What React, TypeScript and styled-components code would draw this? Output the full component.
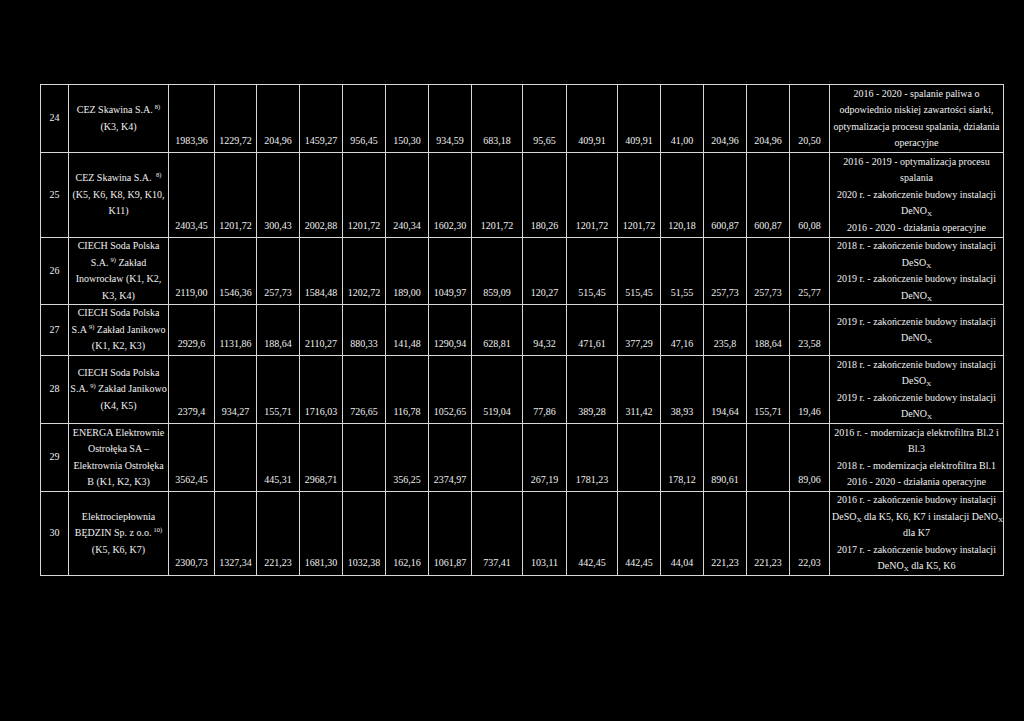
import React from 'react';
import styled, { createGlobalStyle } from 'styled-components';

const GlobalStyle = createGlobalStyle`
  html, body {
    margin: 0;
    padding: 0;
    background: #000;
  }
  body {
    font-family: "Liberation Serif", "Times New Roman", serif;
    color: #f0f0f0;
  }
`;

const Page = styled.div`
  width: 1024px;
  height: 721px;
  box-sizing: border-box;
  padding: 84px 0 0 40px;
  background: #000;
  overflow: hidden;
`;

const Table = styled.table`
  border-collapse: collapse;
  table-layout: fixed;
  width: 964px;
  font-size: 10px;
  line-height: 16.5px;
`;

const Col = styled.col<{ $w: number }>`
  width: ${(p) => p.$w}px;
`;

const Row = styled.tr<{ $h: number }>`
  height: ${(p) => p.$h}px;
`;

const Cell = styled.td`
  border: 1px solid #d8d8d8;
  padding: 0;
  text-align: center;
  vertical-align: middle;
  white-space: nowrap;
  overflow: hidden;
`;

const NumCell = styled(Cell)`
  vertical-align: bottom;
  padding-bottom: 3px;
`;

const NoteCell = styled(Cell)`
  padding: 0 2px;
`;

const Line = styled.div`
  display: block;
`;

const Sup = styled.sup`
  font-size: 6.5px;
  line-height: 0;
  vertical-align: 4px;
  margin-left: 2px;
`;

const Sub = styled.sub`
  font-size: 7px;
  line-height: 0;
  vertical-align: -2px;
`;

const colWidths = [28, 100, 46, 42, 43, 43, 43, 43, 43, 51, 44, 51, 43, 43, 43, 43, 40, 174];

const NOx = () => (
  <>
    DeNO<Sub>X</Sub>
  </>
);
const SOx = () => (
  <>
    DeSO<Sub>X</Sub>
  </>
);

interface Entry {
  lp: string;
  height: number;
  name: React.ReactNode[];
  values: string[];
  notes: React.ReactNode[];
}

const rows: Entry[] = [
  {
    lp: '24',
    height: 68,
    name: [
      <>
        CEZ Skawina S.A.<Sup>8)</Sup>
      </>,
      '(K3, K4)',
    ],
    values: ['1983,96', '1229,72', '204,96', '1459,27', '956,45', '150,30', '934,59', '683,18', '95,65', '409,91', '409,91', '41,00', '204,96', '204,96', '20,50'],
    notes: [
      '2016 - 2020 - spalanie paliwa o',
      'odpowiednio niskiej zawartości siarki,',
      'optymalizacja procesu spalania, działania',
      'operacyjne',
    ],
  },
  {
    lp: '25',
    height: 85,
    name: [
      <>
        CEZ Skawina S.A. <Sup>8)</Sup>
      </>,
      '(K5, K6, K8, K9, K10,',
      'K11)',
    ],
    values: ['2403,45', '1201,72', '300,43', '2002,88', '1201,72', '240,34', '1602,30', '1201,72', '180,26', '1201,72', '1201,72', '120,18', '600,87', '600,87', '60,08'],
    notes: [
      '2016 - 2019 - optymalizacja procesu',
      'spalania',
      '2020 r. - zakończenie budowy  instalacji',
      <NOx />,
      '2016 - 2020 - działania operacyjne',
    ],
  },
  {
    lp: '26',
    height: 67,
    name: [
      'CIECH Soda Polska',
      <>
        S.A.<Sup>9)</Sup> Zakład
      </>,
      'Inowrocław  (K1, K2,',
      'K3, K4)',
    ],
    values: ['2119,00', '1546,36', '257,73', '1584,48', '1202,72', '189,00', '1049,97', '859,09', '120,27', '515,45', '515,45', '51,55', '257,73', '257,73', '25,77'],
    notes: [
      '2018 r. - zakończenie budowy instalacji',
      <SOx />,
      '2019 r. - zakończenie budowy instalacji',
      <NOx />,
    ],
  },
  {
    lp: '27',
    height: 51,
    name: [
      'CIECH Soda Polska',
      <>
        S.A<Sup>9)</Sup> Zakład Janikowo
      </>,
      '(K1, K2, K3)',
    ],
    values: ['2929,6', '1131,86', '188,64', '2110,27', '880,33', '141,48', '1290,94', '628,81', '94,32', '471,61', '377,29', '47,16', '235,8', '188,64', '23,58'],
    notes: ['2019 r. - zakończenie budowy instalacji', <NOx />],
  },
  {
    lp: '28',
    height: 68,
    name: [
      'CIECH Soda Polska',
      <>
        S.A.<Sup>9)</Sup> Zakład Janikowo
      </>,
      '(K4, K5)',
    ],
    values: ['2379,4', '934,27', '155,71', '1716,03', '726,65', '116,78', '1052,65', '519,04', '77,86', '389,28', '311,42', '38,93', '194,64', '155,71', '19,46'],
    notes: [
      '2018 r. - zakończenie budowy instalacji',
      <SOx />,
      '2019 r. - zakończenie budowy instalacji',
      <NOx />,
    ],
  },
  {
    lp: '29',
    height: 68,
    name: ['ENERGA Elektrownie', 'Ostrołęka SA –', 'Elektrownia Ostrołęka', 'B (K1, K2, K3)'],
    values: ['3562,45', '', '445,31', '2968,71', '', '356,25', '2374,97', '', '267,19', '1781,23', '', '178,12', '890,61', '', '89,06'],
    notes: [
      '2016 r. - modernizacja elektrofiltra Bl.2 i',
      'Bl.3',
      '2018 r. - modernizacja elektrofiltra Bl.1',
      '2016 - 2020 - działania operacyjne',
    ],
  },
  {
    lp: '30',
    height: 83,
    name: [
      'Elektrociepłownia',
      <>
        BĘDZIN Sp. z o.o.<Sup>10)</Sup>
      </>,
      '(K5, K6, K7)',
    ],
    values: ['2300,73', '1327,34', '221,23', '1681,30', '1032,38', '162,16', '1061,87', '737,41', '103,11', '442,45', '442,45', '44,04', '221,23', '221,23', '22,03'],
    notes: [
      '2016 r. - zakończenie budowy instalacji',
      <>
        <SOx /> dla K5, K6, K7 i instalacji <NOx />
      </>,
      'dla K7',
      '2017 r. - zakończenie budowy instalacji',
      <>
        <NOx /> dla K5, K6
      </>,
    ],
  },
];

export default function App() {
  return (
    <Page>
      <GlobalStyle />
      <Table>
        <colgroup>
          {colWidths.map((w, i) => (
            <Col key={i} $w={w} />
          ))}
        </colgroup>
        <tbody>
          {rows.map((row) => (
            <Row key={row.lp} $h={row.height}>
              <Cell>{row.lp}</Cell>
              <Cell>
                {row.name.map((line, i) => (
                  <Line key={i}>{line}</Line>
                ))}
              </Cell>
              {row.values.map((v, i) => (
                <NumCell key={i}>{v}</NumCell>
              ))}
              <NoteCell>
                {row.notes.map((line, i) => (
                  <Line key={i}>{line}</Line>
                ))}
              </NoteCell>
            </Row>
          ))}
        </tbody>
      </Table>
    </Page>
  );
}
